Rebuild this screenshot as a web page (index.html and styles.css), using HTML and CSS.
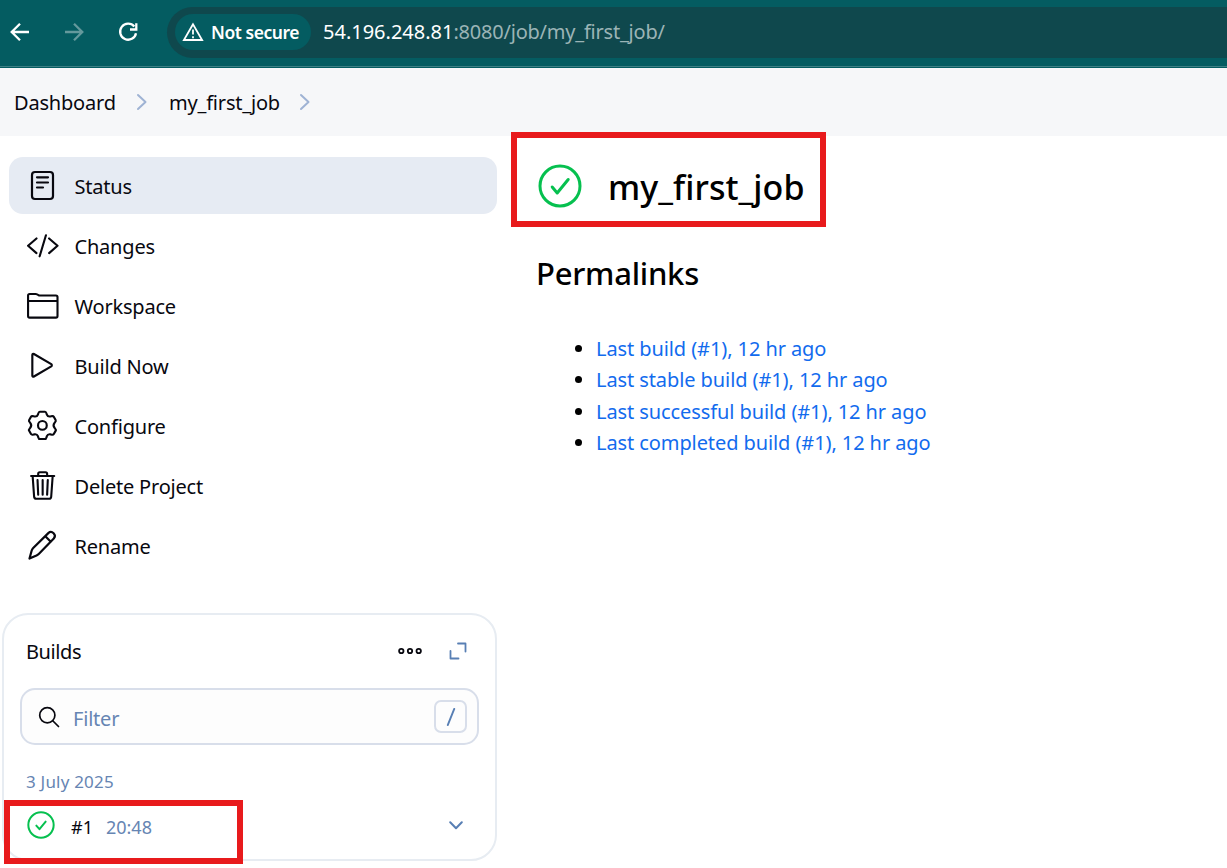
FILE: index.html
```html
<!DOCTYPE html>
<html lang="en">
<head>
<meta charset="utf-8">
<title>my_first_job</title>
<link rel="stylesheet" href="styles.css">
</head>
<body>
<header class="browser">
  <svg class="nav-icon" viewBox="0 0 24 24"><path d="M21 12H4M12 3.700L3.700 12l8.300 8.300"/></svg>
  <svg class="nav-icon dim" viewBox="0 0 24 24"><path d="M3 12h17M12 3.700L20.300 12 12 20.300"/></svg>
  <svg class="nav-icon" viewBox="0 0 24 24"><path d="M18.300 6.600A8 8 0 1 0 20 13.200M20.300 3.200v6.300h-6.300"/></svg>
  <div class="address">
    <div class="chip">
      <svg class="warn" viewBox="0 0 22 20"><path d="M11 2.200L1.900 18h18.200zM11 7.500v5M11 14.200v2"/></svg>
      <span class="chip-text">Not secure</span>
    </div>
    <div class="url"><span class="host">54.196.248.81</span>:8080/job/my_first_job/</div>
  </div>
</header>

<nav class="crumbs">
  <a class="crumb crumb-home">Dashboard</a>
  <svg class="sep" viewBox="0 0 12 18"><path d="M2 2l7.500 7L2 16"/></svg>
  <a class="crumb crumb-job">my_first_job</a>
  <svg class="sep" viewBox="0 0 12 18"><path d="M2 2l7.500 7L2 16"/></svg>
</nav>

<div class="page">
  <aside class="side">
    <div class="tasks">
      <a class="task active"><svg class="icon" viewBox="0 0 36 36"><rect x="8" y="5" width="21" height="27" rx="3"/><path d="M13 10.300h11M13 15.500h11M13 20.500h6"/></svg><span>Status</span></a>
      <a class="task"><svg class="icon" viewBox="-30 -30 548 548"><path class="w" d="M160 368L32 256l128-112M352 368l128-112-128-112M304 96l-96 320"/></svg><span>Changes</span></a>
      <a class="task"><svg class="icon" viewBox="-30 -34 548 548"><path class="w" d="M456 432H56a24 24 0 01-24-24V96a24 24 0 0124-24h92a40 40 0 0122 7l20 10a40 40 0 0022 7H456a24 24 0 0124 24v288a24 24 0 01-24 24zM32 178h448"/></svg><span>Workspace</span></a>
      <a class="task"><svg class="icon" viewBox="-12 -16 536 536"><path class="w" d="M112 104v304c0 14 12 22 24 15l258-151c11-7 11-25 0-32L136 89c-12-7-24 1-24 15z"/></svg><span>Build Now</span></a>
      <a class="task"><svg class="icon" viewBox="-0.900 -0.900 37 37"><path d="M15.300 4h5.400c1.300 0 1.400 1.600 1.900 2.900.6 1.500 2 2.200 3.600 1.900 1.500-.3 2.800-.9 3.500.3l1.900 3.300c.7 1.200-.2 1.900-1.100 3-1.200 1.500-1.200 3.600 0 5.100.9 1.100 1.800 1.900 1.100 3.100l-1.900 3.300c-.7 1.200-2 .6-3.500.3-1.600-.3-3 .4-3.600 1.900-.5 1.300-.6 2.900-1.900 2.900h-5.400c-1.300 0-1.400-1.600-1.900-2.900-.6-1.500-2-2.200-3.600-1.900-1.500.3-2.800.9-3.500-.3l-1.900-3.300c-.7-1.200.2-2 1.100-3.100 1.200-1.500 1.200-3.600 0-5.100-.9-1.100-1.800-1.800-1.100-3l1.900-3.300c.7-1.200 2-.6 3.500-.3 1.600.3 3-.4 3.600-1.900.5-1.300.6-2.900 1.900-2.900z"/><circle cx="18" cy="18" r="4.500"/></svg><span>Configure</span></a>
      <a class="task"><svg class="icon" viewBox="-28 -32 548 548"><path class="w" d="M104 112l22 308c1 18 14 32 32 32h196c18 0 31-14 32-32l22-308M80 106h352M188 106V72a24 24 0 0124-24h88a24 24 0 0124 24v34M256 166v224M178 166l10 224M334 166l-10 224"/></svg><span>Delete Project</span></a>
      <a class="task"><svg class="icon" viewBox="-0.500 -0.500 36 36"><path d="M5 31l2.200-8c.3-1 .7-1.700 1.500-2.500L23.800 5.600a3.900 3.900 0 0 1 5.500 5.500L14.500 26.200c-.8.8-1.500 1.200-2.500 1.700zM20.800 8.700l5.500 5.500"/></svg><span>Rename</span></a>
    </div>

    <section class="builds">
      <div class="builds-head">
        <h2 class="builds-title">Builds</h2>
        <svg class="more" viewBox="0 0 26 8"><circle cx="4.300" cy="4" r="2.200"/><circle cx="13" cy="4" r="2.200"/><circle cx="21.700" cy="4" r="2.200"/></svg>
        <svg class="expand" viewBox="0 0 18 18"><path d="M9 1.500h7.500v8M1.500 9v7.500H9.500"/></svg>
      </div>
      <div class="filter">
        <svg class="search" viewBox="0 0 22 22"><circle cx="9.300" cy="9.300" r="7.600"/><path d="M15 15l5.500 5.500"/></svg>
        <span class="placeholder">Filter</span>
        <kbd class="key"><svg viewBox="0 0 10 18"><path d="M8.200 1L1.800 17"/></svg></kbd>
      </div>
      <div class="date">3 July 2025</div>
      <div class="build">
        <svg class="ok" viewBox="0 0 42 42"><circle cx="21" cy="21" r="19"/><path d="M14 22l4.700 5.300 9.300-11.300"/></svg>
        <span class="num">#1</span>
        <span class="time">20:48</span>
        <svg class="chev" viewBox="0 0 14 9"><path d="M1.200 1.300L7 7.300l5.800-6"/></svg>
        <div class="mark mark-build"></div>
      </div>
    </section>
  </aside>

  <main class="main">
    <div class="headline">
      <svg class="ok-big" viewBox="0 0 44 44"><circle cx="22" cy="22" r="20"/><path d="M14.200 23l5 6 11-13.500"/></svg>
      <h1 class="title">my_first_job</h1>
      <div class="mark mark-title"></div>
    </div>
    <h2 class="subtitle">Permalinks</h2>
    <ul class="links">
      <li><a>Last build (#1), 12 hr ago</a></li>
      <li><a>Last stable build (#1), 12 hr ago</a></li>
      <li><a>Last successful build (#1), 12 hr ago</a></li>
      <li><a>Last completed build (#1), 12 hr ago</a></li>
    </ul>
  </main>
</div>
</body>
</html>
```
FILE: styles.css
```css
* { box-sizing: border-box; }
body {
  margin: 0;
  height: 868px;
  overflow: hidden;
  background: #fff;
  color: #08080f;
  font: 20px/30px "Segoe UI", "Noto Sans", sans-serif;
}
svg { fill: none; stroke: currentColor; stroke-width: 2; stroke-linecap: round; stroke-linejoin: round; flex: none; display: block; }
h1, h2, ul { margin: 0; padding: 0; font-weight: 500; }

.browser {
  height: 68px;
  padding: 6px 0 10px 8px;
  display: flex;
  align-items: center;
  background: #045c61;
  box-shadow: inset 0 -1px #045c61, inset 0 -2px #3d7f84;
  color: #fff;
}
.nav-icon { width: 24px; height: 24px; margin-right: 30px; stroke-width: 2.300; stroke-linecap: butt; stroke-linejoin: miter; }
.dim { color: #64999c; }
.address {
  flex: 1;
  height: 51px;
  margin-left: -3px;
  padding-left: 8px;
  display: flex;
  align-items: center;
  gap: 12px;
  background: #0f484d;
  border-radius: 26px 0 0 26px;
}
.chip {
  width: 136px;
  height: 36px;
  padding-left: 7px;
  display: flex;
  align-items: center;
  gap: 7px;
  border-radius: 18px;
  background: #045c61;
  white-space: nowrap;
}
.warn { width: 22px; height: 20px; stroke-width: 1.800; stroke-linecap: butt; stroke-linejoin: miter; }
.chip-text { font-size: 17.500px; font-weight: 600; letter-spacing: -.45px; }
.url { color: #9bb4b6; font-size: 20px; letter-spacing: -.22px; white-space: nowrap; }
.host { color: #fff; letter-spacing: 0; }

.crumbs { height: 68px; padding: 1px 0 0 14px; display: flex; align-items: center; background: #f6f7f9; }
.crumb { flex: none; letter-spacing: -.2px; }
.crumb-home { width: 122px; }
.crumb-job { width: 130px; margin-left: 21px; }
.sep { width: 12px; height: 18px; margin-top: -2px; color: #9fb3d4; }

.page { display: flex; }
.side { width: 497px; padding-top: 21px; }
.tasks { display: grid; gap: 3px; margin-left: 9px; }
.task { height: 57px; padding: 0 0 1px 15px; display: flex; align-items: center; gap: 15px; border-radius: 14px; letter-spacing: -.2px; }
.task span { padding-top: 3px; margin-left: -.5px; }
.active { background: #e6ebf3; }
.icon { width: 36px; height: 36px; stroke-width: 2.200; }
.w { stroke-width: 32; }

.builds { height: 248px; margin: 39px 0 0 2px; padding: 0 16px; border: 2px solid #e7ecf2; border-radius: 26px; }
.builds-head { height: 73px; padding: 0 12px 0 6px; display: flex; align-items: center; }
.builds-title { flex: 1; padding-top: 1px; font-size: 20px; font-weight: 400; letter-spacing: -.4px; }
.more { width: 26px; height: 8px; margin: -1px 26px 0 0; stroke-width: 1.800; }
.expand { width: 18px; height: 18px; margin-top: -2px; color: #587fb4; stroke-width: 1.800; }
.filter { height: 57px; padding: 0 10px 0 16px; display: flex; align-items: center; border: 2px solid #d8deea; border-radius: 15px; background: #fdfdfd; }
.search { width: 22px; height: 22px; stroke-width: 1.700; }
.placeholder { flex: 1; padding: 4px 0 0 13px; color: #6685b3; letter-spacing: -.2px; }
.key { width: 33px; height: 33px; display: grid; place-items: center; border: 2px solid #d8deea; border-radius: 7px; color: #587fb4; }
.key svg { width: 10px; height: 18px; }
.date { margin: 22px 0 0 6px; font-size: 17px; letter-spacing: .2px; color: #6685b3; }
.build { position: relative; height: 56px; margin-left: 7px; padding-right: 16px; display: flex; align-items: center; }
.ok { width: 28px; height: 28px; color: #06c04f; stroke-width: 3; }
.num { margin-left: 16px; font-size: 18px; padding-top: 3px; }
.time { flex: 1; margin-left: 13px; font-size: 18px; color: #6685b3; padding-top: 3px; }
.chev { width: 14px; height: 9px; color: #587fb4; }
.mark { position: absolute; border: 6px solid #e81a1c; }
.mark-build { left: -23px; top: 3px; width: 239px; height: 64px; }

.main { padding: 28px 0 0 40px; color: #000; }
.headline { position: relative; height: 44px; display: flex; align-items: center; }
.ok-big { width: 44px; height: 44px; margin-left: 1px; color: #06c04f; stroke-width: 3; }
.title { margin-left: 26px; padding-top: 2px; font-size: 34px; line-height: 44px; letter-spacing: .05px; }
.mark-title { left: -26px; top: -32px; width: 315px; height: 95px; }
.subtitle { margin: 43px 0 0 -1px; font-size: 31px; line-height: 44px; letter-spacing: -.25px; }
.links { margin-top: 38px; padding-left: 59px; line-height: 31.400px; letter-spacing: -.09px; }
.links li { height: 31.400px; font-weight: 400; white-space: nowrap; }
.links a { color: #126bee; }
```
